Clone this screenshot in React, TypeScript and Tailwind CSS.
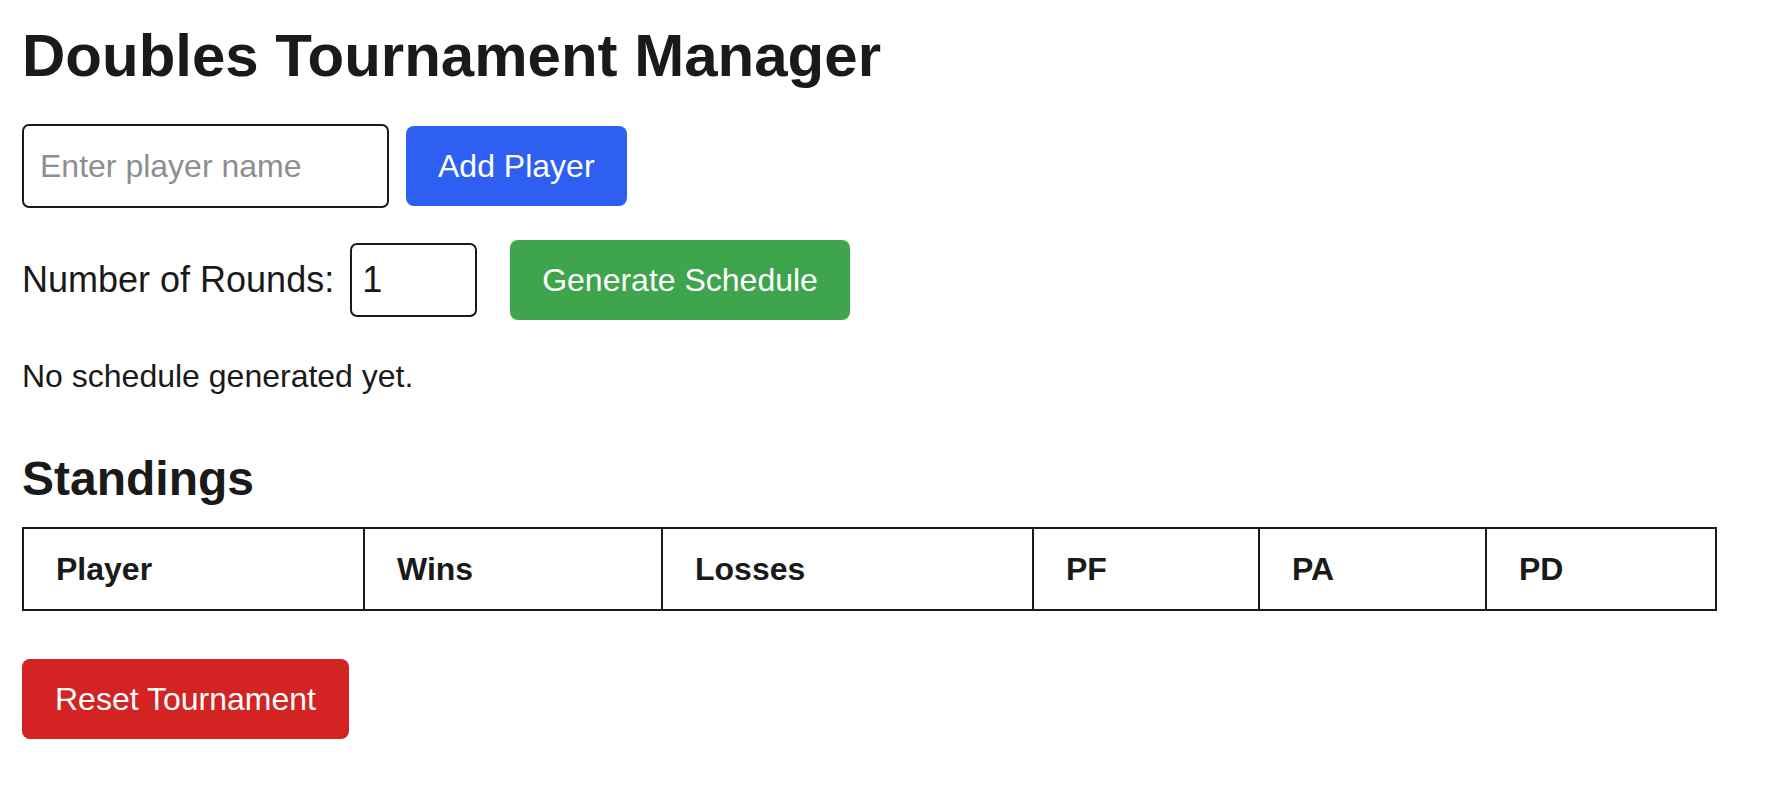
import React, { useState } from "react";

export default function App() {
  const [name, setName] = useState("");
  const [rounds, setRounds] = useState("1");
  const cols: [string, string][] = [
    ["Player", "w-[341px]"],
    ["Wins", "w-[298px]"],
    ["Losses", "w-[371px]"],
    ["PF", "w-[226px]"],
    ["PA", "w-[227px]"],
    ["PD", "w-[230px]"],
  ];
  return (
    <div className="min-h-screen bg-white font-['Liberation_Sans',Arial,Helvetica,sans-serif] text-[#1a1a1a] pt-[20px] px-[22px]">
      <h1 className="text-[60px] leading-[72px] font-bold mb-[32px]">Doubles Tournament Manager</h1>

      <div className="flex items-center gap-[17px] mb-[32px]">
        <input
          value={name}
          onChange={(e) => setName(e.target.value)}
          placeholder="Enter player name"
          className="w-[367px] h-[84px] border-2 border-[#1a1a1a] rounded-[7px] px-[16px] text-[32px] leading-[48px] placeholder:text-[#8e8e8e] outline-none"
        />
        <button className="h-[80px] px-[32px] rounded-[8px] bg-[#2f5ff2] text-white text-[32px] leading-[48px]">
          Add Player
        </button>
      </div>

      <div className="flex items-center mb-[32px]">
        <label className="text-[36px] leading-[56px]">Number of Rounds:</label>
        <input
          value={rounds}
          onChange={(e) => setRounds(e.target.value)}
          className="ml-[16px] w-[127px] h-[74px] border-2 border-[#1a1a1a] rounded-[7px] px-[10px] text-[36px] outline-none"
        />
        <button className="ml-[33px] h-[80px] px-[32px] rounded-[8px] bg-[#3fa54c] text-white text-[32px] leading-[48px]">
          Generate Schedule
        </button>
      </div>

      <p className="text-[32px] leading-[48px]">No schedule generated yet.</p>

      <h2 className="mt-[47px] mb-[16px] text-[48px] leading-[64px] font-bold">Standings</h2>

      <table className="table-fixed border-collapse w-[1693px]">
        <thead>
          <tr>
            {cols.map(([c, w]) => (
              <th
                key={c}
                className={`${w} border-2 border-[#1a1a1a] px-[32px] py-[16px] text-left font-bold text-[32px] leading-[48px]`}
              >
                {c}
              </th>
            ))}
          </tr>
        </thead>
        <tbody></tbody>
      </table>

      <button className="mt-[48px] h-[80px] px-[33px] rounded-[8px] bg-[#d32323] text-white text-[32px] leading-[48px]">
        Reset Tournament
      </button>
    </div>
  );
}
